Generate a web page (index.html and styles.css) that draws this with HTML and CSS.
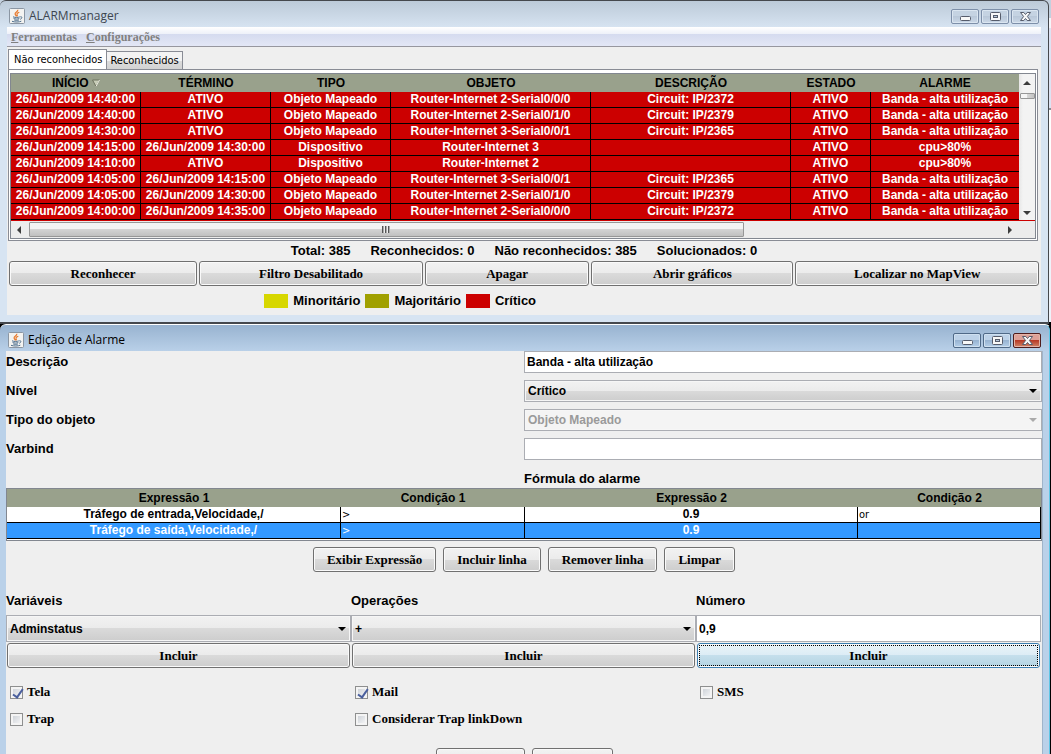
FILE: index.html
```html
<!DOCTYPE html>
<html lang="pt-BR">
<head>
<meta charset="utf-8">
<title>ALARMmanager</title>
<link rel="stylesheet" href="styles.css">
</head>
<body>
<svg class="defs" aria-hidden="true">
  <symbol id="java" viewBox="0 0 16 16">
    <rect x=".5" y=".5" width="15" height="15" rx="1" fill="#f3f3f1" stroke="#8b96a3"/>
    <path d="M8.7 1.8c1 1.700-2.900 2.600-2.600 4.200.1.900 1 1.300 1.200 2.300M10.300 4.200c-1.600.6-2.700 1.300-2.200 2.300.4.700.4 1.200-.2 1.900" fill="none" stroke="#e8792b" stroke-width="1.200"/>
    <path d="M4 8.800c1.800.9 5 .8 6.800.1M4.600 10.500c1.600.7 4 .7 5.700.1M5.200 12c1.300.5 3.300.5 4.700 0M3 13.300c2.500 1 7.500.9 9.300-.1M11.300 8.800c2.200-.4 2.100 1.700-.1 2.500" fill="none" stroke="#4c6d8c" stroke-width="1"/>
  </symbol>
  <symbol id="min" viewBox="0 0 26 13">
    <rect x="8.500" y="6.500" width="10" height="4" rx="1" fill="#f8f8f8" stroke="#565c6b"/>
  </symbol>
  <symbol id="max" viewBox="0 0 26 13">
    <rect x="8.500" y="2.500" width="10" height="8" rx="1" fill="#f8f8f8" stroke="#565c6b"/>
    <rect x="11.500" y="5.500" width="4" height="2" fill="#b8c8da" stroke="#565c6b"/>
  </symbol>
  <symbol id="close" viewBox="0 0 26 13">
    <path d="M8.500 2.500h3.300l1.700 2 1.700-2h3.300L15.400 6.500l3.100 4h-3.300l-1.700-2-1.700 2H8.500l3.100-4z" fill="#f8f8f8" stroke="#565c6b"/>
  </symbol>
</svg>

<section class="window manager">
  <header class="titlebar">
    <svg class="app-icon"><use href="#java"/></svg>
    <h1 class="title">ALARMmanager</h1>
    <button class="control" type="button"><svg><use href="#min"/></svg></button>
    <button class="control" type="button"><svg><use href="#max"/></svg></button>
    <button class="control" type="button"><svg><use href="#close"/></svg></button>
  </header>
  <div class="client">
    <nav class="menubar">
      <button class="menu" type="button"><u>F</u>erramentas</button>
      <button class="menu" type="button"><u>C</u>onfigurações</button>
    </nav>
    <div class="manager-body">
      <div class="tabs">
        <button class="tab active" type="button">Não reconhecidos</button>
        <button class="tab" type="button">Reconhecidos</button>
      </div>
      <div class="tab-pane">
        <div class="scroll-box">
          <div class="scroll-view">
            <table class="grid alarms">
              <colgroup><col class="w130"><col class="w130"><col class="w120"><col class="w200"><col class="w200"><col class="w80"><col></colgroup>
              <thead><tr><th>INÍCIO <svg class="sort" viewBox="0 0 8 8"><path d="M.5 1h7L4 7.500z" fill="#c9ceb8" stroke="#6d735f"/><path d="M7.500 1L4 7.500" stroke="#eef0e4"/></svg></th><th>TÉRMINO</th><th>TIPO</th><th>OBJETO</th><th>DESCRIÇÃO</th><th>ESTADO</th><th>ALARME</th></tr></thead>
              <tbody>
                <tr><td>26/Jun/2009 14:40:00</td><td>ATIVO</td><td>Objeto Mapeado</td><td>Router-Internet 2-Serial0/0/0</td><td>Circuit: IP/2372</td><td>ATIVO</td><td>Banda - alta utilização</td></tr>
                <tr><td>26/Jun/2009 14:40:00</td><td>ATIVO</td><td>Objeto Mapeado</td><td>Router-Internet 2-Serial0/1/0</td><td>Circuit: IP/2379</td><td>ATIVO</td><td>Banda - alta utilização</td></tr>
                <tr><td>26/Jun/2009 14:30:00</td><td>ATIVO</td><td>Objeto Mapeado</td><td>Router-Internet 3-Serial0/0/1</td><td>Circuit: IP/2365</td><td>ATIVO</td><td>Banda - alta utilização</td></tr>
                <tr><td>26/Jun/2009 14:15:00</td><td>26/Jun/2009 14:30:00</td><td>Dispositivo</td><td>Router-Internet 3</td><td></td><td>ATIVO</td><td>cpu&gt;80%</td></tr>
                <tr><td>26/Jun/2009 14:10:00</td><td>ATIVO</td><td>Dispositivo</td><td>Router-Internet 2</td><td></td><td>ATIVO</td><td>cpu&gt;80%</td></tr>
                <tr><td>26/Jun/2009 14:05:00</td><td>26/Jun/2009 14:15:00</td><td>Objeto Mapeado</td><td>Router-Internet 3-Serial0/0/1</td><td>Circuit: IP/2365</td><td>ATIVO</td><td>Banda - alta utilização</td></tr>
                <tr><td>26/Jun/2009 14:05:00</td><td>26/Jun/2009 14:30:00</td><td>Objeto Mapeado</td><td>Router-Internet 2-Serial0/1/0</td><td>Circuit: IP/2379</td><td>ATIVO</td><td>Banda - alta utilização</td></tr>
                <tr><td>26/Jun/2009 14:00:00</td><td>26/Jun/2009 14:35:00</td><td>Objeto Mapeado</td><td>Router-Internet 2-Serial0/0/0</td><td>Circuit: IP/2372</td><td>ATIVO</td><td>Banda - alta utilização</td></tr>
              </tbody>
            </table>
            <div class="vscroll"><i class="arrow up"></i><i class="vthumb"></i><i class="arrow down"></i></div>
          </div>
          <div class="hscroll"><i class="arrow left"></i><div class="track"><div class="hthumb"><i class="grip"></i></div></div><i class="arrow right"></i></div>
        </div>
      </div>
      <div class="totals"><span>Total: 385</span><span>Reconhecidos: 0</span><span>Não reconhecidos: 385</span><span>Solucionados: 0</span></div>
      <div class="actions">
        <button class="btn a1" type="button">Reconhecer</button>
        <button class="btn a2" type="button">Filtro Desabilitado</button>
        <button class="btn a3" type="button">Apagar</button>
        <button class="btn a4" type="button">Abrir gráficos</button>
        <button class="btn a5" type="button">Localizar no MapView</button>
      </div>
      <div class="legend">
        <span class="level minor">Minoritário</span>
        <span class="level major">Majoritário</span>
        <span class="level critical">Crítico</span>
      </div>
    </div>
  </div>
</section>

<section class="window editor">
  <header class="titlebar">
    <svg class="app-icon"><use href="#java"/></svg>
    <h2 class="title">Edição de Alarme</h2>
    <button class="control" type="button"><svg><use href="#min"/></svg></button>
    <button class="control" type="button"><svg><use href="#max"/></svg></button>
    <button class="control danger" type="button"><svg><use href="#close"/></svg></button>
  </header>
  <form class="client editor-body">
    <div class="fields">
      <label for="desc">Descrição</label><input class="text" id="desc" type="text" value="Banda - alta utilização">
      <label for="level">Nível</label><span class="combo"><select id="level"><option>Crítico</option></select></span>
      <label for="type">Tipo do objeto</label><span class="combo disabled"><select id="type" disabled><option>Objeto Mapeado</option></select></span>
      <label for="varbind">Varbind</label><input class="text" id="varbind" type="text">
      <span class="formula" id="formula">Fórmula do alarme</span>
    </div>
    <div class="formula-box">
      <table class="grid expressions" aria-labelledby="formula">
        <colgroup><col class="w334"><col class="w184"><col class="w333"><col></colgroup>
        <thead><tr><th>Expressão 1</th><th>Condição 1</th><th>Expressão 2</th><th>Condição 2</th></tr></thead>
        <tbody>
          <tr><td>Tráfego de entrada,Velocidade,/</td><td class="cond">&gt;</td><td>0.9</td><td class="cond">or</td></tr>
          <tr class="selected"><td>Tráfego de saída,Velocidade,/</td><td class="cond">&gt;</td><td>0.9</td><td class="cond"></td></tr>
        </tbody>
      </table>
    </div>
    <div class="row-buttons">
      <button class="btn" type="button">Exibir Expressão</button>
      <button class="btn" type="button">Incluir linha</button>
      <button class="btn" type="button">Remover linha</button>
      <button class="btn" type="button">Limpar</button>
    </div>
    <div class="builder">
      <div class="part"><label for="vars">Variáveis</label><span class="combo"><select id="vars"><option>Adminstatus</option></select></span><button class="btn" type="button">Incluir</button></div>
      <div class="part"><label for="ops">Operações</label><span class="combo"><select id="ops"><option>+</option></select></span><button class="btn" type="button">Incluir</button></div>
      <div class="part"><label for="num">Número</label><input class="text" id="num" type="text" value="0,9"><button class="btn focused" type="button">Incluir</button></div>
    </div>
    <div class="checks">
      <label class="check"><input type="checkbox" checked>Tela</label>
      <label class="check"><input type="checkbox" checked>Mail</label>
      <label class="check"><input type="checkbox">SMS</label>
      <label class="check"><input type="checkbox">Trap</label>
      <label class="check"><input type="checkbox">Considerar Trap linkDown</label>
    </div>
    <div class="footer">
      <button class="btn f1" type="button"></button>
      <button class="btn f2" type="button"></button>
    </div>
  </form>
</section>
</body>
</html>
```
FILE: styles.css
```css
* { box-sizing: border-box; }

body {
  margin: 0;
  height: 100vh;
  overflow: hidden;
  display: flex;
  flex-direction: column;
  background: linear-gradient(#c3d0de 0 18px, #f4f7fb 18px 28px, #dde3f3 28px 108px, #8a8d94 108px 110px, #fff 110px 200px, #eef3fa 200px 322px, #000 322px);
  font: bold 12px/16px "Liberation Sans", Arial, sans-serif;
  color: #000;
}

button, input, select { font: inherit; color: inherit; margin: 0; border-radius: 0; }

.defs { display: none; }

/* Window frames */
.window { flex: none; }

.manager {
  margin-right: 2px;
  padding: 0 7px 7px;
  border: solid #45484d;
  border-width: 1px 1px 2px 0;
  border-radius: 6px 6px 0 0;
  background: linear-gradient(#bccad8, #d7e4f2 27px);
}

.editor {
  padding: 0 7px 0 6px;
  border-top: 1px solid #fff;
  border-right: 1px solid #000;
  border-radius: 6px 6px 0 0;
  box-shadow: inset -1px 0 #5fc6e6;
  background: linear-gradient(#98b3d0, #bad1e9 27px);
}

.titlebar {
  display: flex;
  align-items: center;
  gap: 2px;
  height: 26px;
  padding: 4px 2px 0;
}

.app-icon { width: 16px; height: 16px; }

.title {
  flex: 1;
  margin: 0 0 0 2px;
  font: 12px/16px "Open Sans", "Noto Sans", sans-serif;
}

.manager .title { color: #3d4650; }

.control {
  width: 28px;
  height: 15px;
  padding: 0;
  border: 1px solid #7d8fa9;
  border-radius: 2px;
  background: linear-gradient(#c5d3e2 50%, #b9c8d9 50%, #cbd8e7);
  box-shadow: inset 0 0 0 1px #dbe6f1;
}

.control svg { display: block; width: 26px; height: 13px; }

.editor .control {
  border-color: #4f6987;
  background: linear-gradient(#bdd2e8 50%, #98b4d2 50%, #b5cfe9);
  box-shadow: inset 0 0 0 1px #cfe0f0;
}

.editor .danger {
  border-color: #4f1c1c;
  background: linear-gradient(#dda198 50%, #b83a26 50%, #d08467);
  box-shadow: inset 0 0 0 1px #e3b3a7;
}

.client { background: #efefef; }

.menubar {
  display: flex;
  gap: 9px;
  height: 20px;
  padding: 0 4px;
  border-bottom: 1px solid #97979f;
  background: linear-gradient(#fff, #eef1f9 7px, #d5dbef 7px, #e3e7f6);
}

.menu {
  padding: 0;
  border: 0;
  background: none;
  color: #808080;
  font: bold 12px/18px "Liberation Serif", "Times New Roman", serif;
}

/* Alarm tabs and list */
.manager-body { padding: 2px 1px 6px; }

.tabs { display: flex; align-items: flex-end; }

.tab {
  height: 18px;
  padding: 0 3px;
  border: 1px solid #898c95;
  border-left: 0;
  border-bottom: 0;
  background: linear-gradient(#f3f3f3 50%, #dcdcdc 50%, #d3d3d3);
  font: 11px/16px "DejaVu Sans Condensed", "Noto Sans", sans-serif;
}

.tab.active {
  height: 20px;
  padding: 0 4px 0 5px;
  border-left: 1px solid #898c95;
  background: #fff;
}

.tab-pane {
  margin-right: 2px;
  padding: 3px 1px 1px;
  border: 1px solid #898c95;
  background: #fff;
}

.scroll-box { border: 1px solid #828790; background: #efefef; }

.scroll-view { display: flex; border-bottom: 1px solid #c00; }

.grid { flex: 1; width: 100%; table-layout: fixed; border-spacing: 0; }

.grid th { height: 18px; padding: 0; background: #99a18c; line-height: 16px; }

.grid td {
  height: 16px;
  padding: 0;
  border: solid #000;
  border-width: 0 1px 1px 0;
  line-height: 15px;
  text-align: center;
  white-space: nowrap;
  overflow: hidden;
}

.alarms td { background: #c00; color: #fff; }
.alarms td:last-child { border-right: 0; }

.w80 { width: 80px; }
.w120 { width: 120px; }
.w130 { width: 130px; }
.w184 { width: 184px; }
.w200 { width: 200px; }
.w333 { width: 333px; }
.w334 { width: 334px; }

.sort { width: 8px; height: 8px; }

.vscroll {
  display: flex;
  flex-direction: column;
  align-items: center;
  width: 16px;
  padding: 7px 0 5px;
  background: linear-gradient(90deg, #e6e6e6, #f3f3f3 4px);
}

.vthumb {
  width: 15px;
  height: 6px;
  margin: 8px 0 auto;
  border: 1px solid #979797;
  border-radius: 1px;
  background: linear-gradient(90deg, #f5f5f5 50%, #d6d6d6 50%, #c2c2c2);
}

.arrow { border: solid transparent; }
.up { border-width: 0 4px 4px; border-bottom-color: #3c3c3c; }
.down { border-width: 4px 4px 0; border-top-color: #3c3c3c; }
.left { border-width: 4px 4px 4px 0; border-right-color: #3c3c3c; }
.right { border-width: 4px 0 4px 4px; border-left-color: #3c3c3c; }

.hscroll {
  display: flex;
  align-items: center;
  height: 17px;
  padding: 0 23px 0 6px;
  background: #ececec;
}

.track { flex: 1; margin-left: 8px; }

.hthumb {
  display: flex;
  align-items: center;
  justify-content: center;
  width: 73%;
  height: 15px;
  border: 1px solid #979797;
  border-radius: 1px;
  background: linear-gradient(#f3f3f3 50%, #d3d3d3 50%, #c0c0c0);
}

.grip {
  width: 8px;
  height: 7px;
  background: repeating-linear-gradient(90deg, #555 0 1px, #aaa 1px 2px, #eee 2px 3px);
}

.totals {
  display: flex;
  justify-content: center;
  gap: 20px;
  padding: 2px 0;
  font-size: 13px;
}

.actions { display: flex; gap: 2px; padding: 0 1px; }
.actions .btn { flex-basis: 0; padding: 0; }
.a1 { flex-grow: 188; }
.a2 { flex-grow: 224; }
.a3 { flex-grow: 164; }
.a4 { flex-grow: 202; }
.a5 { flex-grow: 244; }

.btn {
  height: 25px;
  padding: 0 13px;
  border: 1px solid #707070;
  border-radius: 3px;
  background: linear-gradient(#f2f2f2, #ebebeb 50%, #dadada 50%, #cdcdcd);
  box-shadow: inset 0 0 0 1px #fafafa;
  font: bold 13px/16px "Liberation Serif", "Times New Roman", serif;
}

.btn.focused {
  border-color: #3c7fb1;
  background: linear-gradient(#eaf4f9, #dcecf5 50%, #c5dfec 50%, #b3d3e2);
  outline: 1px dotted #000;
  outline-offset: -3px;
}

.legend {
  display: flex;
  justify-content: center;
  gap: 5px;
  padding: 7px 24% 0 0;
  font-size: 13px;
}

.level { display: flex; align-items: center; gap: 5px; }
.level::before { content: ""; width: 24px; height: 14px; }
.minor::before { background: #d7d700; }
.major::before { background: #a0a000; }
.critical::before { background: #c00; }

/* Alarm editor */
.editor-body { border-right: 1px solid #9fb4ca; }

.fields {
  display: grid;
  grid-template-columns: 1fr 1fr;
  align-items: center;
  row-gap: 7px;
}

.fields label, .part label, .formula { font-size: 13px; }

.text {
  width: 100%;
  min-width: 0;
  height: 22px;
  padding: 0 2px;
  border: 1px solid #abadb3;
  background: #fff;
}

.combo { display: grid; position: relative; }

.combo select {
  appearance: none;
  width: 100%;
  height: 22px;
  padding: 0 18px 0 3px;
  border: 1px solid #abadb3;
  background: linear-gradient(#f2f2f2, #ebebeb 50%, #dadada 50%, #cdcdcd);
  box-shadow: inset 0 0 0 1px #f6f6f6;
}

.combo::after {
  content: "";
  position: absolute;
  right: 5px;
  top: calc(50% - 2px);
  border: solid transparent;
  border-width: 4px 4px 0;
  border-top-color: #000;
  pointer-events: none;
}

.combo.disabled select { background: #f4f4f4; color: #9a9a9a; opacity: 1; }
.combo.disabled::after { border-top-color: #aaa; }

.formula { grid-column: 2; padding: 4px 0 0; }

.formula-box { margin-top: 1px; padding-bottom: 1px; border: 1px solid #828790; background: #fff; }
.expressions .cond { padding-left: 1px; text-align: left; font: 11px/15px "DejaVu Sans Condensed", "Noto Sans", sans-serif; }
.selected td { background: #39f; color: #fff; }

.row-buttons { display: flex; justify-content: center; gap: 7px; padding: 6px 0 21px; }

.builder { display: grid; grid-template-columns: repeat(3, 1fr); padding-right: 1px; }
.part { display: flex; flex-direction: column; }
.part label { margin-bottom: 6px; }
.part .text, .part select { height: 27px; }
.part .btn { margin: 1px; }

.checks { display: grid; grid-template-columns: repeat(3, 1fr); row-gap: 11px; padding: 15px 1px 0 0; }
.check { display: flex; align-items: center; gap: 4px; padding-left: 4px; font: bold 13px/16px "Liberation Serif", "Times New Roman", serif; }

.check input {
  appearance: none;
  position: relative;
  width: 13px;
  height: 13px;
  border: 1px solid #8e8f8f;
  background: linear-gradient(135deg, #c6cbd2, #fbfbfb);
  box-shadow: inset 0 0 0 2px #f4f4f4;
}

.check input:checked::after {
  content: "";
  position: absolute;
  left: 4px;
  top: 0;
  width: 4px;
  height: 9px;
  border: solid #4a5f9d;
  border-width: 0 2px 2px 0;
  transform: rotate(35deg);
}

.footer { display: flex; justify-content: center; gap: 7px; padding-top: 21px; }
.f1 { width: 89px; }
.f2 { width: 81px; }
```
